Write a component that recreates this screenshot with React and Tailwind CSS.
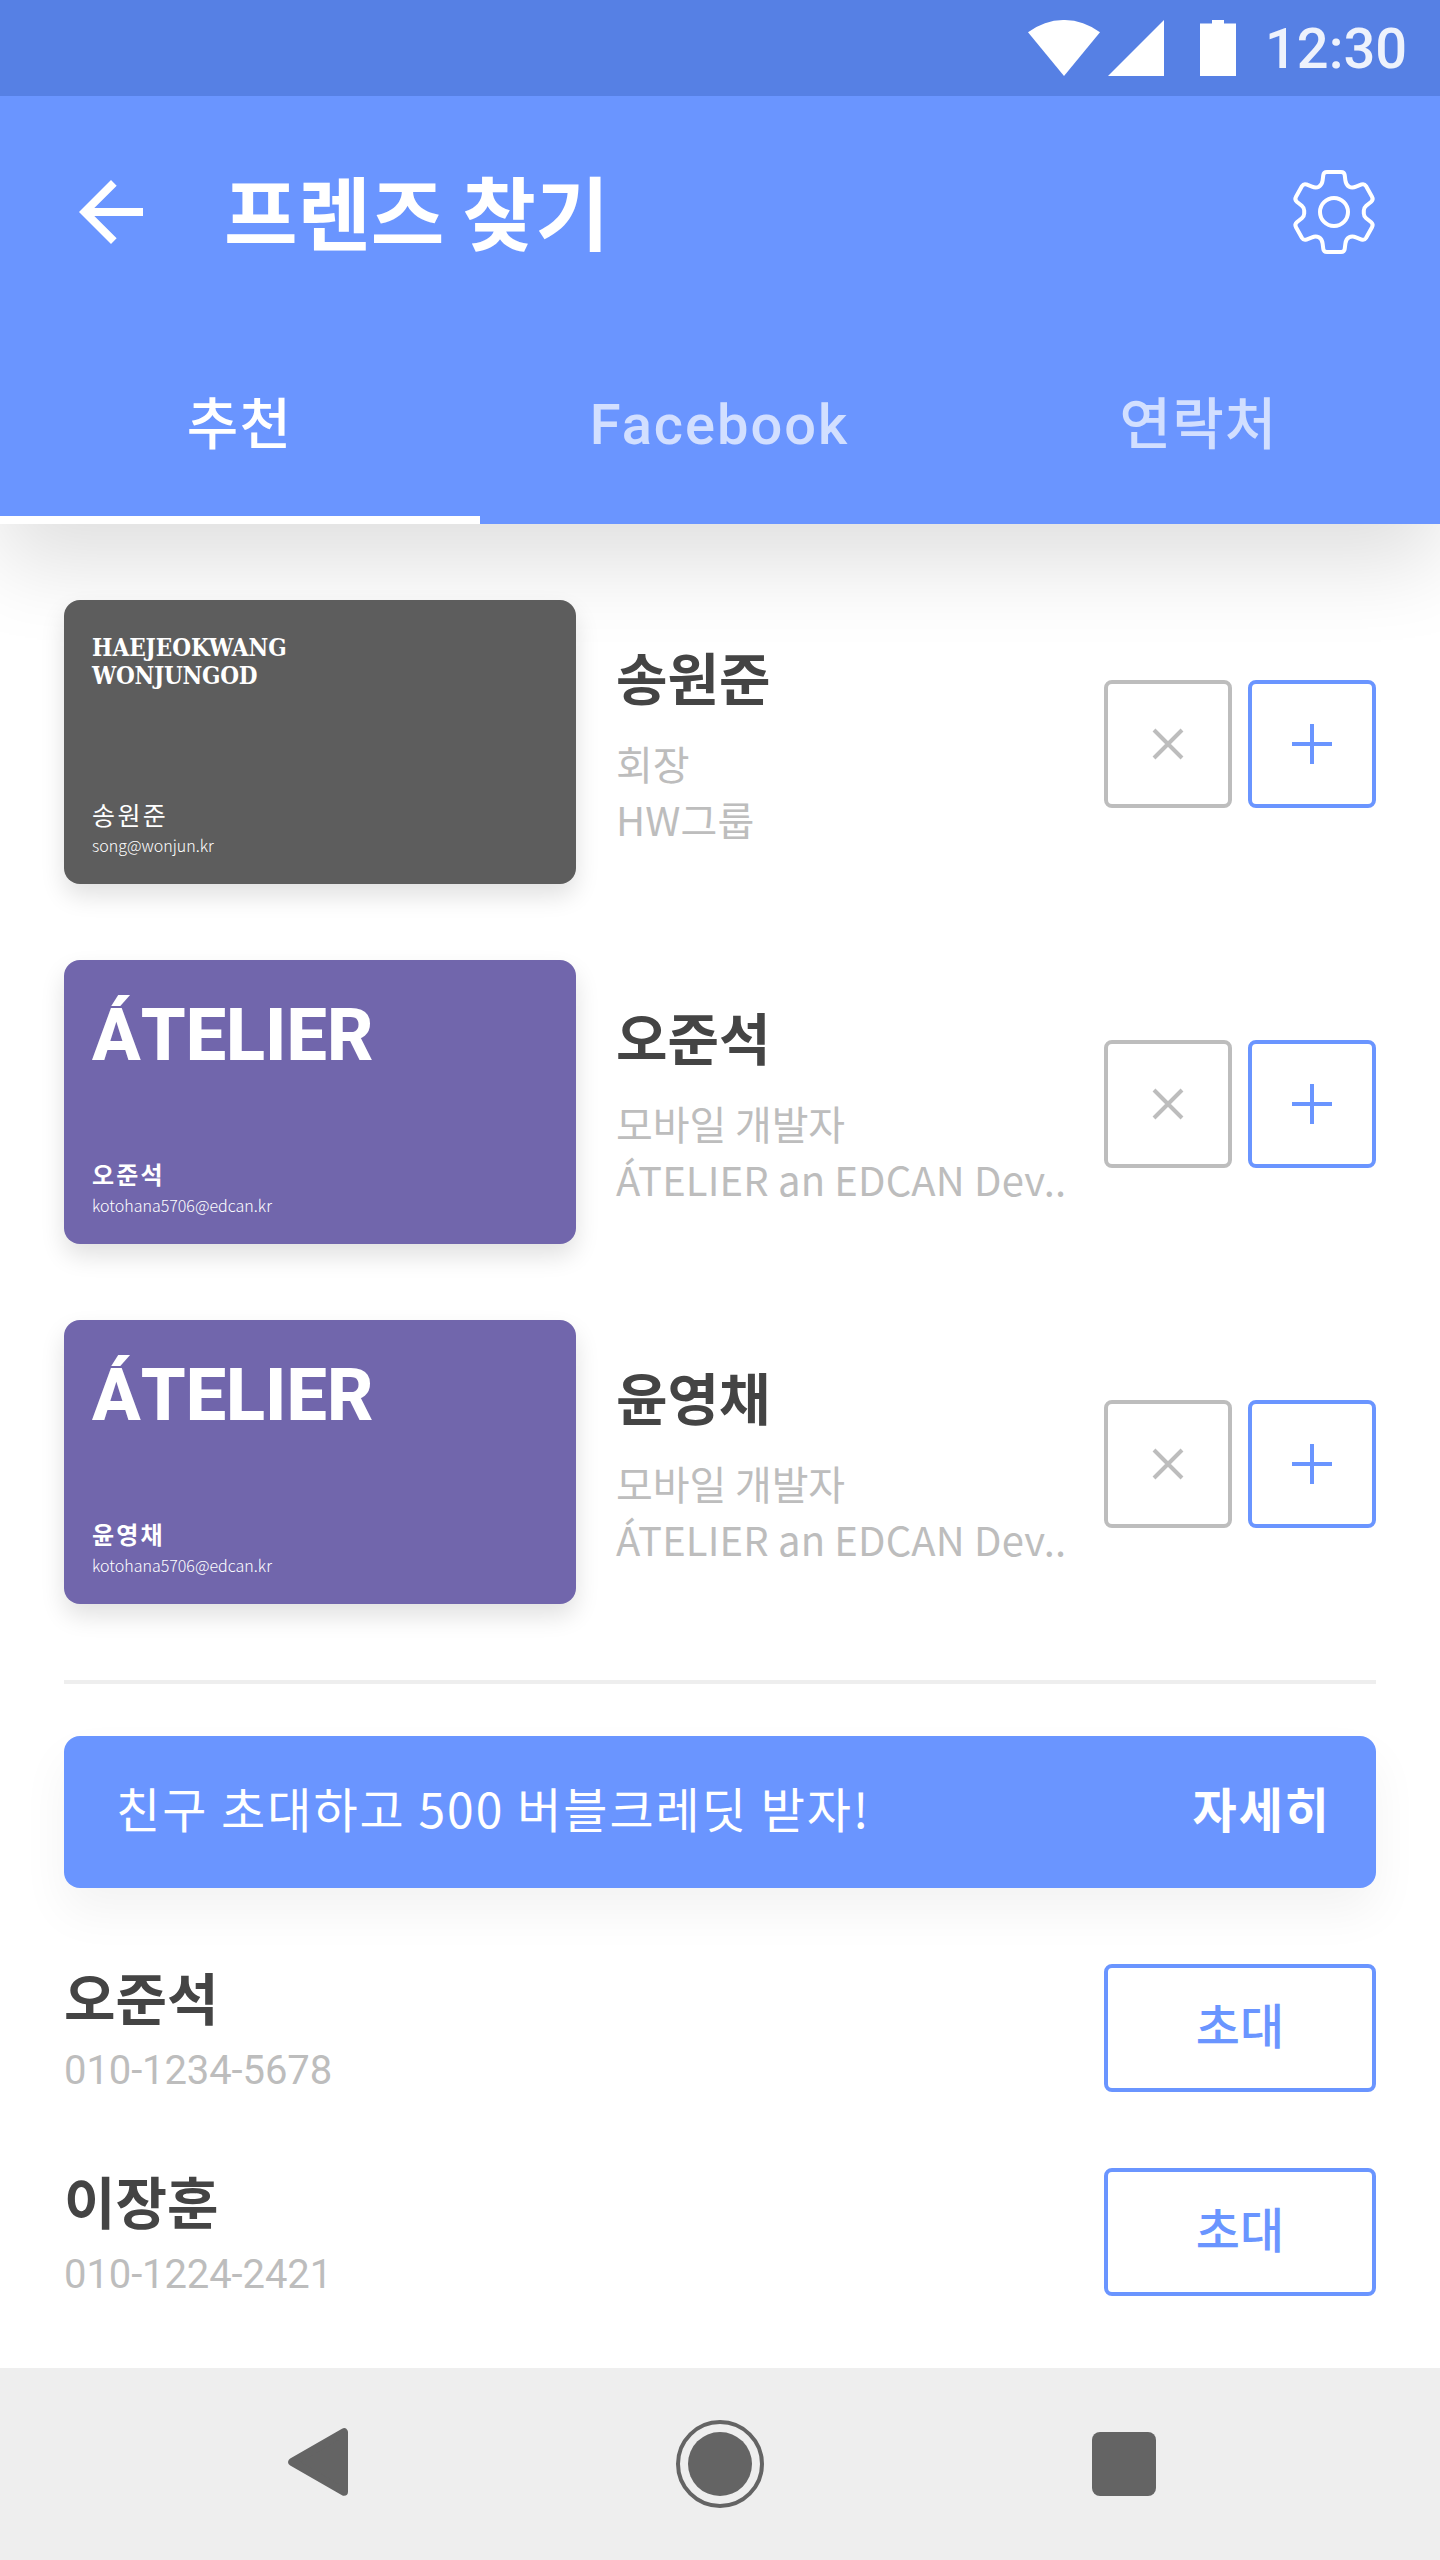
import React from "react";

const friends = [
  { name: "송원준", role: "회장", org: "HW그룹", email: "song@wonjun.kr", brand: "haejeokwang" },
  { name: "오준석", role: "모바일 개발자", org: "ÁTELIER an EDCAN Dev..", email: "kotohana5706@edcan.kr", brand: "atelier" },
  { name: "윤영채", role: "모바일 개발자", org: "ÁTELIER an EDCAN Dev..", email: "kotohana5706@edcan.kr", brand: "atelier" },
];

const contacts = [
  { name: "오준석", phone: "010-1234-5678" },
  { name: "이장훈", phone: "010-1224-2421" },
];

function StatusBar() {
  return (
    <div className="flex h-24 items-center bg-[#5680e4] pr-[33px]">
      <svg className="ml-auto h-14 w-[72px]" viewBox="0 0 72 56" fill="#fff">
        <path d="M36 56 0 12.3A58.8 58.8 0 0 1 72 12.3Z" />
      </svg>
      <svg className="ml-2 h-14 w-14" viewBox="0 0 56 56" fill="#fff">
        <path d="M56 0V56H0Z" />
      </svg>
      <svg className="ml-9 h-14 w-9" viewBox="0 0 36 56" fill="#fff">
        <path d="M12 0H24V3.6H36V56H0V3.6H12Z" />
      </svg>
      <span className="mt-0.5 ml-[29px] w-[142px] font-['Roboto',sans-serif] text-[56px] leading-[58px] font-medium text-white/90">
        12:30
      </span>
    </div>
  );
}

function GearIcon() {
  return (
    <svg className="h-[88px] w-[88px]" viewBox="-44 -44 88 88" fill="none" stroke="#fff" strokeWidth="4" strokeLinejoin="round">
      <circle r="14" />
      <path d="M-7 -40H7Q10.3 -40 10.7 -37L11.4 -31.5C12.2 -25.5 17 -23 22 -25.4L27.6 -27.6Q30.4 -28.5 32 -26L38 -15.2Q39.6 -12.4 37.2 -10.3L32.2 -6.3Q29.8 -4.2 29.8 -1.5V1.5Q29.8 4.2 32.2 6.3L37.2 10.3Q39.6 12.4 38 15.2L32 26Q30.4 28.5 27.6 27.6L22 25.4C17 23 12.2 25.5 11.4 31.5L10.7 37Q10.3 40 7 40H-7Q-10.3 40 -10.7 37L-11.4 31.5C-12.2 25.5 -17 23 -22 25.4L-27.6 27.6Q-30.4 28.5 -32 26L-38 15.2Q-39.6 12.4 -37.2 10.3L-32.2 6.3Q-29.8 4.2 -29.8 1.5V-1.5Q-29.8 -4.2 -32.2 -6.3L-37.2 -10.3Q-39.6 -12.4 -38 -15.2L-32 -26Q-30.4 -28.5 -27.6 -27.6L-22 -25.4C-17 -23 -12.2 -25.5 -11.4 -31.5L-10.7 -37Q-10.3 -40 -7 -40Z" />
    </svg>
  );
}

function Header() {
  return (
    <header className="relative z-10 bg-[#6a95ff] shadow-[0_40px_80px_rgba(0,0,0,0.126)]">
      <StatusBar />
      <div className="flex h-[232px] items-center pr-[62px] pl-[63px]">
        <svg className="h-24 w-24" viewBox="0 0 24 24" fill="#fff">
          <path d="M20 11H7.83l5.59-5.59L12 4l-8 8 8 8 1.41-1.41L7.83 13H20z" />
        </svg>
        <h1 className="-mt-1.5 ml-[65px] text-[80px] leading-none font-bold tracking-[-0.2px] text-white">프렌즈 찾기</h1>
        <div className="ml-auto">
          <GearIcon />
        </div>
      </div>
      <nav className="grid h-[196px] grid-cols-3 items-baseline pt-[51px] text-center text-[56px] font-medium text-white/70">
        <span className="pr-px leading-[81px] tracking-[0.02em] text-white">추천</span>
        <span className="pr-px font-['Roboto',sans-serif] leading-[80px] tracking-[2px]">Facebook</span>
        <span className="pr-[3px] leading-[81px] tracking-[0.02em]">연락처</span>
      </nav>
      <div className="absolute bottom-0 left-0 h-2 w-1/3 bg-white" />
    </header>
  );
}

function BusinessCard({ friend }) {
  const dark = friend.brand === "haejeokwang";
  return (
    <div
      className={
        "flex h-[284.44px] w-[512px] flex-none flex-col justify-between rounded-2xl px-7 pb-[31px] text-white shadow-[0_12px_24px_rgba(0,0,0,0.12)] " +
        (dark ? "bg-[#5d5d5d] pt-[34px]" : "bg-[#7166ac] pt-10")
      }
    >
      {dark ? (
        <div className="font-['DejaVu_Serif_Condensed','DejaVu_Serif',serif] text-2xl leading-7 font-bold">
          <p>HAEJEOKWANG</p>
          <p className="tracking-[-0.25px]">WONJUNGOD</p>
        </div>
      ) : (
        <div className="font-['Roboto',sans-serif] text-[72px] leading-[72px] font-extrabold [font-kerning:none]">ÁTELIER</div>
      )}
      <div>
        <div className={dark ? "text-[25px] leading-6 tracking-[2.4px]" : "text-2xl leading-6 font-bold tracking-[2.2px]"}>
          {friend.name}
        </div>
        <div className="mt-[11px] text-base leading-4 font-light">{friend.email}</div>
      </div>
    </div>
  );
}

function FriendRow({ friend }) {
  return (
    <li className="flex h-[360px] items-start">
      <BusinessCard friend={friend} />
      <div className="ml-10 flex-1 pt-10">
        <p className="text-[56px] leading-[71px] font-bold text-[#444]">{friend.name}</p>
        <p className="mt-6 text-[40px] leading-[56px] tracking-[-0.1px] text-[#bdbdbd]">{friend.role}</p>
        <p className="text-[40px] leading-[56px] tracking-[0.15px] whitespace-nowrap text-[#bdbdbd]">{friend.org}</p>
      </div>
      <div className="mt-20 flex gap-4">
        <button className="flex h-32 w-32 items-center justify-center rounded-lg border-4 border-[#bdbdbd]">
          <svg className="h-10 w-10" viewBox="0 0 40 40" stroke="#bdbdbd" strokeWidth="4">
            <path d="M6 6 34 34M34 6 6 34" />
          </svg>
        </button>
        <button className="flex h-32 w-32 items-center justify-center rounded-lg border-4 border-[#6a95ff]">
          <svg className="h-10 w-10" viewBox="0 0 40 40" stroke="#6a95ff" strokeWidth="4">
            <path d="M20 0V40M0 20H40" />
          </svg>
        </button>
      </div>
    </li>
  );
}

function ContactRow({ contact }) {
  return (
    <li className="flex h-32 justify-between">
      <div>
        <p className="text-[56px] leading-[63px] font-bold text-[#444]">{contact.name}</p>
        <p className="mt-[15px] font-['Roboto',sans-serif] text-[40px] leading-[57px] tracking-[-0.1px] text-[#bdbdbd]">{contact.phone}</p>
      </div>
      <button className="flex h-32 w-[272px] items-center justify-center rounded-lg border-4 border-[#6a95ff] pb-2.5 text-5xl leading-none font-medium text-[#6a95ff]">
        초대
      </button>
    </li>
  );
}

function NavigationBar() {
  return (
    <footer className="flex h-48 items-center justify-between bg-[#eee] pr-[284px] pl-72">
      <svg className="-mt-1 h-[68px] w-[60px]" viewBox="0 0 60 68" fill="#646464" stroke="#646464" strokeWidth="8" strokeLinejoin="round">
        <path d="M56 4.2V63.8L4.2 34Z" />
      </svg>
      <div className="flex h-[88px] w-[88px] items-center justify-center rounded-full border-4 border-[#646464]">
        <div className="h-16 w-16 flex-none rounded-full bg-[#646464]" />
      </div>
      <div className="h-16 w-16 rounded-lg bg-[#646464]" />
    </footer>
  );
}

export default function App() {
  return (
    <div className="w-[1440px] bg-white font-['Noto_Sans_CJK_KR',sans-serif]">
      <Header />
      <main className="px-16 pt-[76px] pb-[72px]">
        <ul className="relative z-20">
          {friends.map((friend) => (
            <FriendRow key={friend.name} friend={friend} />
          ))}
        </ul>
        <div className="h-1 bg-[#eee]" />
        <div className="mt-[52px] flex h-[152px] items-center justify-between rounded-2xl bg-[#6a95ff] pr-[45px] pb-2.5 pl-[52px] text-5xl leading-none text-white shadow-[0_24px_48px_rgba(0,0,0,0.05)]">
          <p className="tracking-[2px]">친구 초대하고 500 버블크레딧 받자!</p>
          <p className="font-bold tracking-[2px]">자세히</p>
        </div>
        <ul className="mt-[76px] flex flex-col gap-[76px]">
          {contacts.map((contact) => (
            <ContactRow key={contact.phone} contact={contact} />
          ))}
        </ul>
      </main>
      <NavigationBar />
    </div>
  );
}
